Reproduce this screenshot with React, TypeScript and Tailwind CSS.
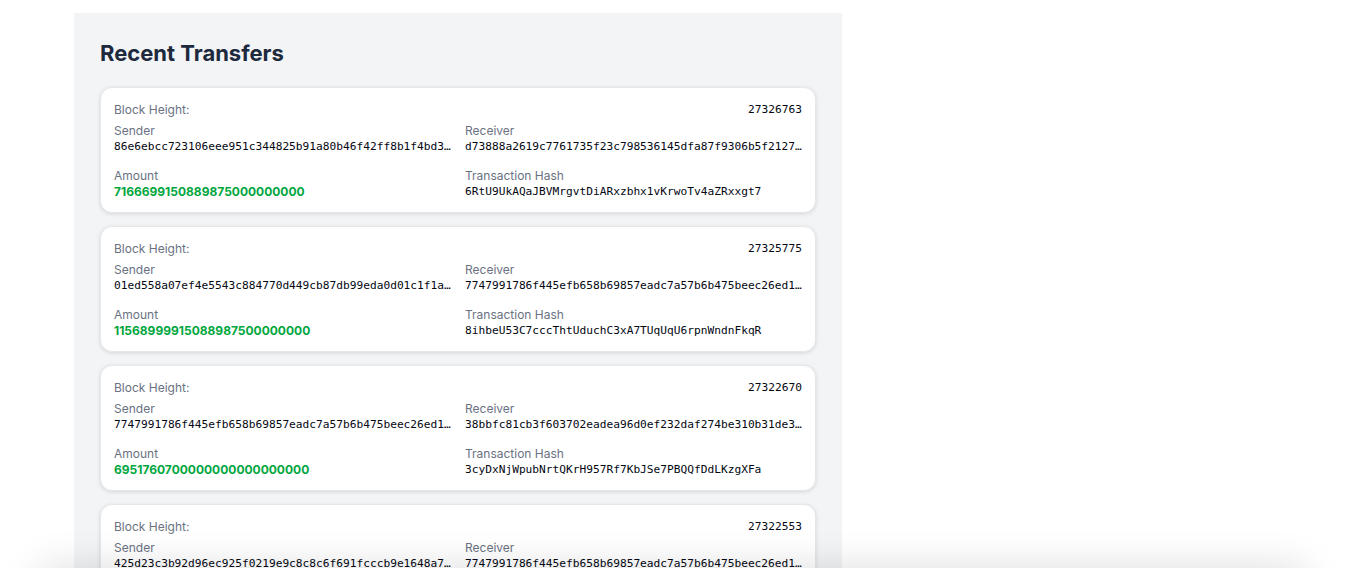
import React from 'react'

interface Transfer {
  height: string
  sender: string
  receiver: string
  amount: string
  hash: string
}

const transfers: Transfer[] = [
  {
    height: '27326763',
    sender: '86e6ebcc723106eee951c344825b91a80b46f42ff8b1f4bd3a91c0e2d7f6',
    receiver: 'd73888a2619c7761735f23c798536145dfa87f9306b5f21275c0aa1e94',
    amount: '7166699150889875000000000',
    hash: '6RtU9UkAQaJBVMrgvtDiARxzbhx1vKrwoTv4aZRxxgt7',
  },
  {
    height: '27325775',
    sender: '01ed558a07ef4e5543c884770d449cb87db99eda0d01c1f1a6c0b3e7d2',
    receiver: '7747991786f445efb658b69857eadc7a57b6b475beec26ed1f09a3c4b8',
    amount: '11568999915088987500000000',
    hash: '8ihbeU53C7cccThtUduchC3xA7TUqUqU6rpnWndnFkqR',
  },
  {
    height: '27322670',
    sender: '7747991786f445efb658b69857eadc7a57b6b475beec26ed1f09a3c4b8',
    receiver: '38bbfc81cb3f603702eadea96d0ef232daf274be310b31de3c5e7a90f1',
    amount: '6951760700000000000000000',
    hash: '3cyDxNjWpubNrtQKrH957Rf7KbJSe7PBQQfDdLKzgXFa',
  },
  {
    height: '27322553',
    sender: '425d23c3b92d96ec925f0219e9c8c8c6f691fcccb9e1648a7e2d0c4f51',
    receiver: '7747991786f445efb658b69857eadc7a57b6b475beec26ed1f09a3c4b8',
    amount: '2400000000000000000000000',
    hash: '5kVd2xQp9HcM3Jt7Wz8RbN4yLgFsA6uTe1oYiP2qXrC',
  },
]

const sans = "font-['Inter','Liberation_Sans',sans-serif]"
const mono = "font-['DejaVu_Sans_Mono','Liberation_Mono',monospace] text-[11.2px] leading-4 text-gray-950"

function TransferCard({ t }: { t: Transfer }) {
  return (
    <div className="bg-white rounded-xl border border-gray-200 shadow-[0_1px_4px_rgba(0,0,0,0.12)] px-[13px] pt-[14px] pb-[12px]">
      <div className="flex items-center justify-between h-4 mb-[5px]">
        <span className="text-xs leading-4 text-gray-500">Block Height:</span>
        <span className={mono}>{t.height}</span>
      </div>
      <div className="grid grid-cols-2 gap-x-[14px] gap-y-[13px]">
        <div className="min-w-0">
          <div className="text-xs leading-4 text-gray-500">Sender</div>
          <div className={`${mono} truncate`}>{t.sender}</div>
        </div>
        <div className="min-w-0">
          <div className="text-xs leading-4 text-gray-500">Receiver</div>
          <div className={`${mono} truncate`}>{t.receiver}</div>
        </div>
        <div className="min-w-0">
          <div className="text-xs leading-4 text-gray-500">Amount</div>
          <div className="text-xs leading-4 font-bold text-green-600">{t.amount}</div>
        </div>
        <div className="min-w-0">
          <div className="text-xs leading-4 text-gray-500">Transaction Hash</div>
          <div className={`${mono} truncate`}>{t.hash}</div>
        </div>
      </div>
    </div>
  )
}

export default function App() {
  return (
    <div className={`min-h-screen bg-white ${sans}`}>
      <div className="ml-[74px] pt-[13px]">
        <section className="w-[768px] bg-gray-100 px-[26px] pt-6 pb-6">
          <h2 className="text-[22px] leading-8 font-bold text-slate-800 mb-[18px]">Recent Transfers</h2>
          <div className="flex flex-col gap-[13px]">
            {transfers.map(t => (
              <TransferCard key={t.height} t={t} />
            ))}
          </div>
        </section>
      </div>
      {/* bar just below the fold, only its shadow shows */}
      <div className="fixed left-[40px] right-[40px] top-full h-10 bg-white shadow-[0_0_40px_rgba(0,0,0,0.14)]" />
    </div>
  )
}
